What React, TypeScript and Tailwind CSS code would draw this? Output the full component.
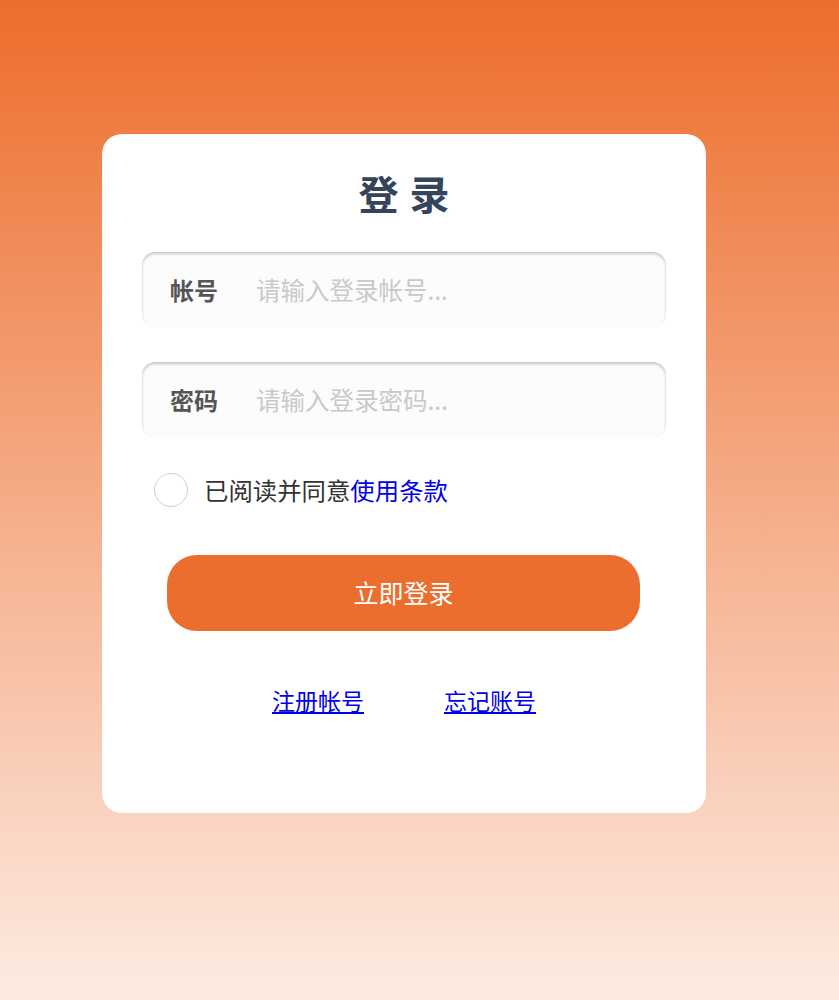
import React from "react";

export default function App() {
  return (
    <div
      className="min-h-[1000px] w-full bg-[linear-gradient(to_bottom,#ed6d2c,#fdebe2)] pt-[134px] pb-[40px]"
      style={{ fontFamily: '"Noto Sans CJK SC", "Noto Sans", sans-serif' }}
    >
      <div className="ml-[102px] w-[604px] rounded-[20px] bg-white px-10 pt-[35px] pb-[97px]">
        <h1 className="text-center text-[40px] leading-[48px] font-bold tracking-[11px] pl-[11px] text-[#34445a]">
          登录
        </h1>

        <div className="mt-[35px] flex flex-col gap-[34px]">
          <div className="flex h-[76px] items-center rounded-[13px] bg-[#fcfcfc] pl-[28px] shadow-[inset_0_2px_3px_rgba(0,0,0,0.22)]">
            <span className="w-[86px] shrink-0 text-[24px] font-bold text-[#555]">帐号</span>
            <input
              className="min-w-0 flex-1 bg-transparent text-[24.5px] text-[#333] outline-none placeholder:text-[#c9c9c9]"
              placeholder="请输入登录帐号..."
            />
          </div>
          <div className="flex h-[76px] items-center rounded-[13px] bg-[#fcfcfc] pl-[28px] shadow-[inset_0_2px_3px_rgba(0,0,0,0.22)]">
            <span className="w-[86px] shrink-0 text-[24px] font-bold text-[#555]">密码</span>
            <input
              type="password"
              className="min-w-0 flex-1 bg-transparent text-[24.5px] text-[#333] outline-none placeholder:text-[#c9c9c9]"
              placeholder="请输入登录密码..."
            />
          </div>
        </div>

        <div className="mt-[35px] flex items-center gap-4 pl-[12px]">
          <span className="h-[34px] w-[34px] shrink-0 rounded-full border border-[#cfcfcf] bg-white" />
          <span className="text-[24.4px] leading-[34px] text-[#333]">
            已阅读并同意<span className="text-[#0000ee]">使用条款</span>
          </span>
        </div>

        <div className="mt-[48px] flex justify-center pr-[1px]">
          <button className="h-[76px] w-[473px] rounded-[30px] bg-[#ec6e2e] text-[25px] text-white">
            立即登录
          </button>
        </div>

        <div className="mt-[53px] flex justify-center gap-[80px]">
          <a href="#" className="text-[23px] leading-[32px] text-[#0000ee] underline">
            注册帐号
          </a>
          <a href="#" className="text-[23px] leading-[32px] text-[#0000ee] underline">
            忘记账号
          </a>
        </div>
      </div>
    </div>
  );
}
